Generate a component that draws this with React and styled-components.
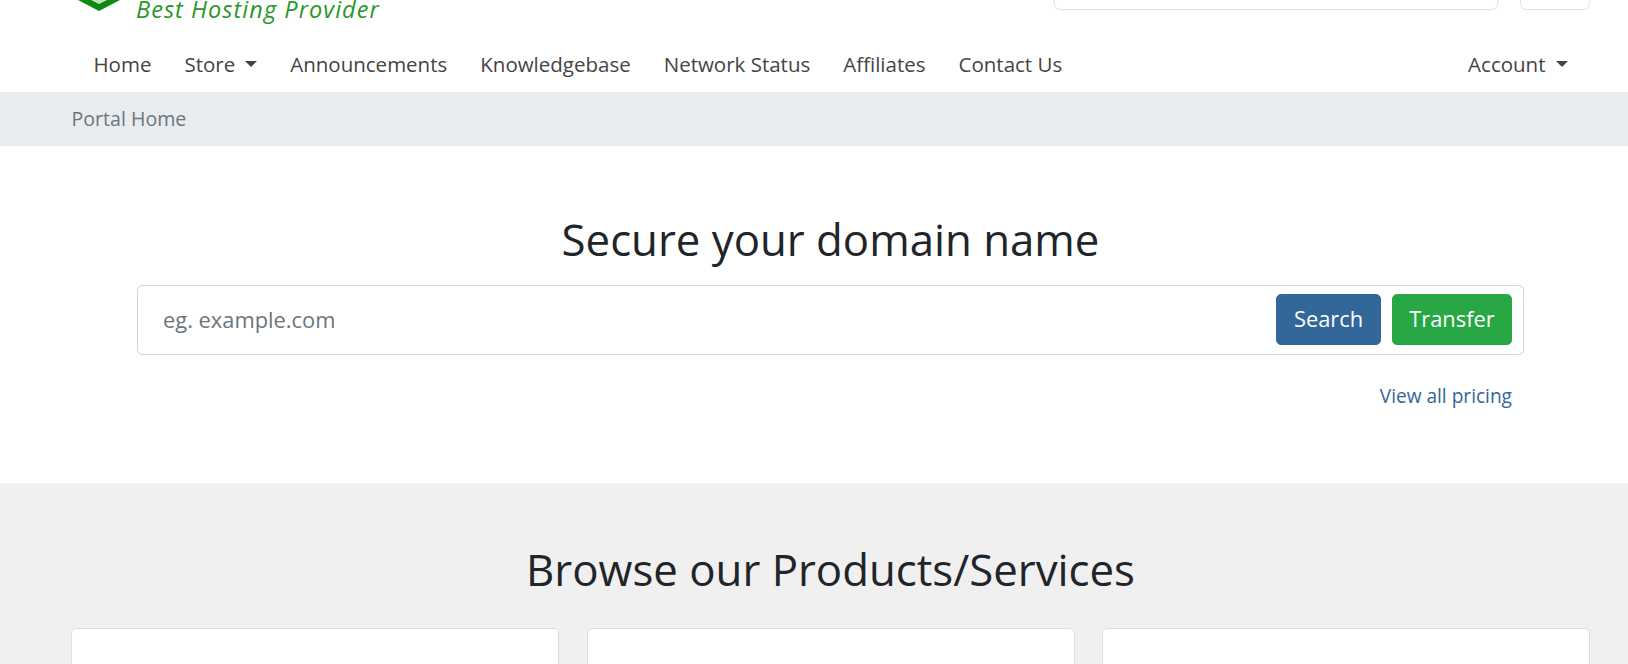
import React from 'react'
import styled, { createGlobalStyle } from 'styled-components'

const Global = createGlobalStyle`
    html, body {
        margin: 0;
        padding: 0;
        background: #fff;
        height: 664px;
        overflow: hidden;
    }
    * {
        box-sizing: border-box;
    }
    body {
        font-family: "Open Sans", "Liberation Sans", sans-serif;
        color: #212529;
    }
`;

const TopBar = styled.div`
    height: 38px;
    overflow: hidden;
    padding: 0 38px 0 72px;
    display: flex;
    justify-content: space-between;
    align-items: flex-start;
`;

const Logo = styled.div`
    display: flex;
    align-items: flex-end;
    height: 20px;
    padding-left: 6px;
`;

const LogoMark = styled.svg`
    width: 42px;
    height: 11px;
    margin-bottom: 9px;
    flex: none;
`;

const LogoText = styled.span`
    margin-left: 16px;
    font-style: italic;
    font-size: 23.5px;
    line-height: 22px;
    letter-spacing: 1.05px;
    white-space: nowrap;
    color: #2a962a;
`;

const TopControls = styled.div`
    display: flex;
    gap: 22px;
`;

const GhostBox = styled.div`
    height: 10px;
    width: ${p => p.$w}px;
    border: 1px solid #e2e4e7;
    border-top: 0;
    border-radius: 0 0 6px 6px;
`;

const Nav = styled.nav`
    height: 54px;
    padding: 0 44px 2px 77px;
    display: flex;
    align-items: center;
    justify-content: space-between;
`;

const NavList = styled.div`
    display: flex;
`;

const NavItem = styled.a`
    padding: 0 16.5px;
    font-size: 20.5px;
    line-height: 30px;
    color: #444;
    white-space: nowrap;
    display: flex;
    align-items: center;
`;

const Caret = styled.span`
    margin-left: 10px;
    border-top: 6px solid #444;
    border-left: 6px solid transparent;
    border-right: 6px solid transparent;
`;

const Breadcrumb = styled.div`
    height: 54px;
    background: #e9ecef;
    padding: 0 0 2px 71.5px;
    display: flex;
    align-items: center;
    font-size: 19.6px;
    color: #6c757d;
`;

const DomainSection = styled.section`
    height: 337px;
    padding: 66px 104px 0 137px;
`;

const Title = styled.h2`
    margin: 0;
    font-weight: 400;
    font-size: 43.75px;
    line-height: 54px;
    text-align: center;
    color: #212529;
`;

const SearchBox = styled.div`
    margin-top: 19px;
    height: 70px;
    border: 1px solid #ced4da;
    border-radius: 5px;
    padding: 0 11px 1px 25px;
    display: flex;
    align-items: center;
    gap: 11px;
    background: #fff;
`;

const SearchInput = styled.input`
    flex: 1;
    min-width: 0;
    border: 0;
    outline: 0;
    padding: 0;
    font-family: inherit;
    font-size: 21.875px;
    color: #495057;
    &::placeholder {
        color: #6c757d;
        opacity: 1;
    }
`;

const Button = styled.button`
    height: 51px;
    width: ${p => p.$w}px;
    padding: 0 0 2px;
    border: 1px solid ${p => p.$bg};
    border-radius: 5px;
    background: ${p => p.$bg};
    color: #fff;
    font-family: inherit;
    font-size: 21.875px;
`;

const PricingRow = styled.div`
    margin-top: 26px;
    padding-right: 12px;
    text-align: right;
    font-size: 19.1px;
    line-height: 30px;
`;

const PricingLink = styled.a`
    color: #336699;
`;

const Browse = styled.section`
    height: 181px;
    overflow: hidden;
    background: #f0f0f0;
    padding: 59px 38px 0 71px;
`;

const CardGrid = styled.div`
    margin-top: 32px;
    display: grid;
    grid-template-columns: repeat(3, 1fr);
    gap: 27.5px;
`;

const Card = styled.div`
    height: 120px;
    background: #fff;
    border: 1px solid #ddd;
    border-radius: 5px;
`;

const links = ['Home', 'Store', 'Announcements', 'Knowledgebase', 'Network Status', 'Affiliates', 'Contact Us']

const App = () => {
  return (
    <>
      <Global />
      <TopBar>
        <Logo>
          <LogoMark viewBox="0 0 42 11">
            <path d="M0 0 L21 11 L42 0 Z" fill="#0e8a12" />
            <path d="M13 0 L21 4 L29 0 Z" fill="#bfe3bf" />
          </LogoMark>
          <LogoText>Best Hosting Provider</LogoText>
        </Logo>
        <TopControls>
          <GhostBox $w={444} />
          <GhostBox $w={70} />
        </TopControls>
      </TopBar>

      <Nav>
        <NavList>
          {links.map((item) => (
            <NavItem key={item}>
              {item}
              {item === 'Store' && <Caret />}
            </NavItem>
          ))}
        </NavList>
        <NavItem>Account<Caret /></NavItem>
      </Nav>

      <Breadcrumb>Portal Home</Breadcrumb>

      <DomainSection>
        <Title>Secure your domain name</Title>
        <SearchBox>
          <SearchInput placeholder="eg. example.com" />
          <Button $bg="#336699" $w={105}>Search</Button>
          <Button $bg="#28a745" $w={120}>Transfer</Button>
        </SearchBox>
        <PricingRow><PricingLink>View all pricing</PricingLink></PricingRow>
      </DomainSection>

      <Browse>
        <Title>Browse our Products/Services</Title>
        <CardGrid>
          <Card />
          <Card />
          <Card />
        </CardGrid>
      </Browse>
    </>
  )
}

export default App
